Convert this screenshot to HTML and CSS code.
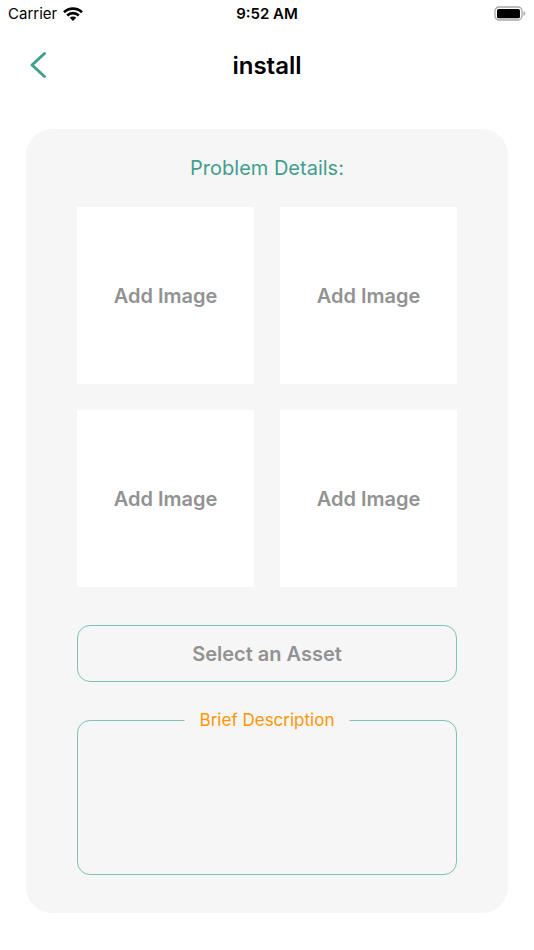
FILE: index.html
```html
<!DOCTYPE html>
<html lang="en">
<head>
<meta charset="utf-8">
<meta name="viewport" content="width=device-width, initial-scale=1">
<title>install</title>
<link rel="stylesheet" href="styles.css">
</head>
<body>
<div class="status">
  <div class="carrier"><span>Carrier</span>
    <svg width="20" height="14" viewBox="0 0 20 14" fill="none" stroke="#000" stroke-width="2.6"><path d="M1 5.2a13 13 0 0 1 18 0M4.2 8.5a8.3 8.3 0 0 1 11.6 0"/><path d="M10 14l-3.2-3.3a4.6 4.6 0 0 1 6.4 0z" fill="#000" stroke="none"/></svg>
  </div>
  <time>9:52 AM</time>
  <svg class="battery" width="32" height="15" viewBox="0 0 32 15"><rect x="1" y="1" width="27" height="13" rx="4" fill="none" stroke="#a6a6a6" stroke-width="1.3"/><rect x="3" y="3" width="23" height="9.3" rx="1.6"/><path d="M29.5 5q1.8.7 1.8 2.5t-1.8 2.5z" fill="#a6a6a6"/></svg>
</div>
<header class="header">
  <button class="back" type="button" aria-label="Back"><svg width="18" height="28" viewBox="0 0 18 28" fill="none" stroke="#429e8f" stroke-width="3" stroke-linecap="round" stroke-linejoin="round"><path d="M15.5 2.5L3 14l12.500 11.500"/></svg></button>
  <h1>install</h1>
</header>
<main class="card">
  <h2>Problem Details:</h2>
  <div class="images">
    <button type="button">Add Image</button>
    <button type="button">Add Image</button>
    <button type="button">Add Image</button>
    <button type="button">Add Image</button>
  </div>
  <button class="asset" type="button">Select an Asset</button>
  <div class="field">
    <label for="description">Brief Description</label>
    <textarea id="description"></textarea>
  </div>
</main>
</body>
</html>
```
FILE: styles.css
```css
* { box-sizing: border-box; }
body { margin: 0; background: #fff; color: #000; font-family: Inter, "Liberation Sans", sans-serif; }
button { font: inherit; border: 0; cursor: pointer; }
.status { display: grid; grid-template-columns: 1fr auto 1fr; align-items: center; height: 27px; padding: 0 8px; font-size: 15px; }
.carrier { display: flex; align-items: center; gap: 6px; }
.status time { font-weight: 600; }
.battery { justify-self: end; }
.header { display: grid; grid-template-columns: 1fr auto 1fr; align-items: center; height: 76px; padding: 0 29px; }
.back { justify-self: start; display: flex; padding: 0; background: none; }
.header h1 { margin: 0; font-size: 24px; font-weight: 600; }
.card { display: flex; flex-direction: column; margin: 26px 26px 36px; padding: 26px 51px 38px; background: #f6f6f6; border-radius: 26px; }
.card h2 { margin: 0 0 26px; font-size: 20px; line-height: 26px; font-weight: 400; text-align: center; color: #429e8f; }
.images { display: grid; grid-template-columns: 1fr 1fr; gap: 26px; }
.images button { aspect-ratio: 1; padding: 0; background: #fff; }
.images button, .asset { font-size: 20px; font-weight: 600; color: #929292; }
.asset { height: 57px; margin: 38px 0; background: none; border: 1px solid #7fc1b5; border-radius: 13px; }
.field { position: relative; display: flex; }
.field label { position: absolute; top: -12px; left: 50%; transform: translateX(-50%); padding: 0 15px; background: #f6f6f6; color: #ff9500; font-size: 17px; line-height: 24px; white-space: nowrap; }
.field textarea { width: 100%; height: 155px; padding: 20px 16px; font: inherit; background: none; border: 1px solid #7fc1b5; border-radius: 13px; resize: none; outline: 0; }
```
